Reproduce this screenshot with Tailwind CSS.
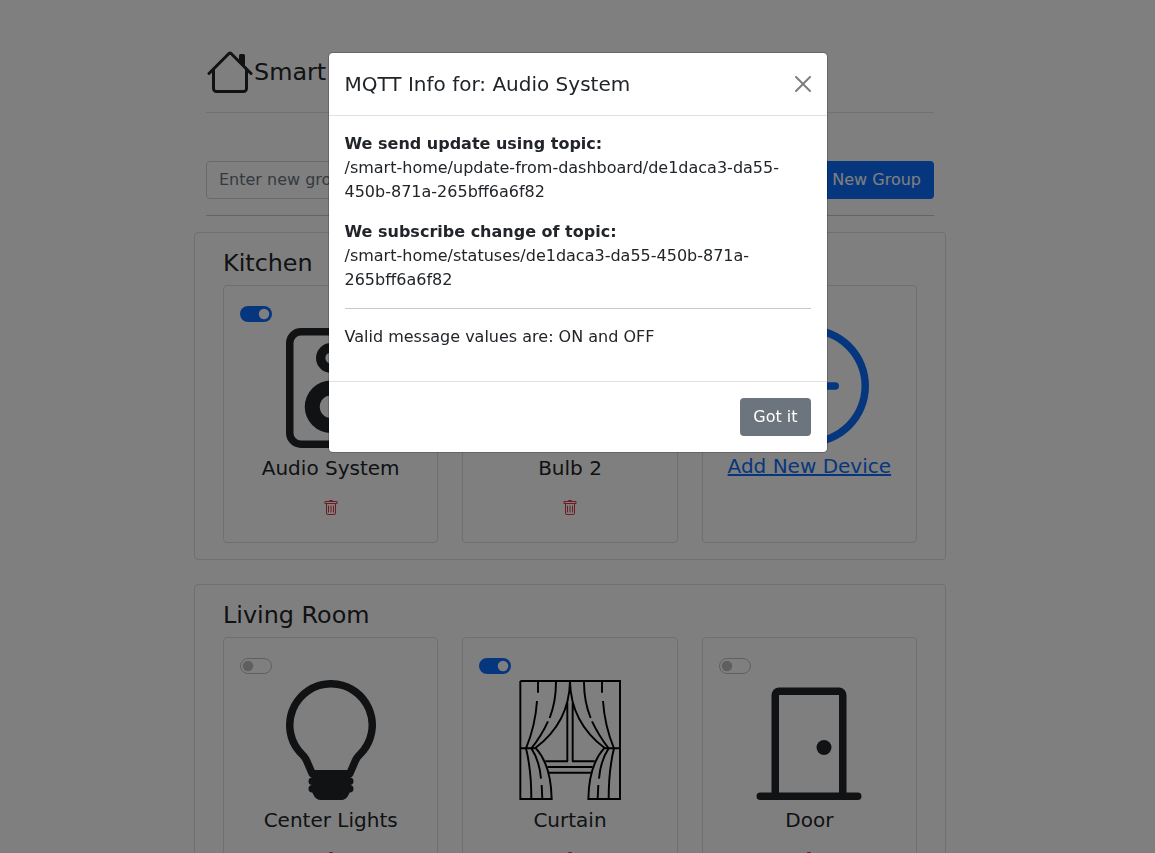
<!DOCTYPE html>
<html lang="en">
<head>
<meta charset="utf-8">
<title>Smart Home</title>
<script src="https://cdn.jsdelivr.net/npm/@tailwindcss/browser@4"></script>
</head>
<body class="bg-white font-['DejaVu_Sans',sans-serif] text-base text-[#212529]">
<svg class="hidden" xmlns="http://www.w3.org/2000/svg">
  <symbol id="trash" viewBox="0 0 16 16"><path d="M5.5 5.5A.5.5 0 0 1 6 6v6a.5.5 0 0 1-1 0V6a.5.5 0 0 1 .5-.5zm2.5 0a.5.5 0 0 1 .5.5v6a.5.5 0 0 1-1 0V6a.5.5 0 0 1 .5-.5zm3 .5a.5.5 0 0 0-1 0v6a.5.5 0 0 0 1 0V6z"/><path fill-rule="evenodd" d="M14.5 3a1 1 0 0 1-1 1H13v9a2 2 0 0 1-2 2H5a2 2 0 0 1-2-2V4h-.5a1 1 0 0 1-1-1V2a1 1 0 0 1 1-1H6a1 1 0 0 1 1-1h2a1 1 0 0 1 1 1h3.5a1 1 0 0 1 1 1v1zM4.118 4 4 4.059V13a1 1 0 0 0 1 1h6a1 1 0 0 0 1-1V4.059L11.882 4H4.118zM2.5 3V2h11v1h-11z"/></symbol>
  <symbol id="bulb" viewBox="0 0 16 16"><path d="M2 6a6 6 0 1 1 10.174 4.31c-.203.196-.359.4-.453.619l-.762 1.769A.5.5 0 0 1 10.5 13a.5.5 0 0 1 0 1 .5.5 0 0 1 0 1l-.224.447a1 1 0 0 1-.894.553H6.618a1 1 0 0 1-.894-.553L5.5 15a.5.5 0 0 1 0-1 .5.5 0 0 1 0-1 .5.5 0 0 1-.46-.302l-.761-1.77a1.964 1.964 0 0 0-.453-.618A5.984 5.984 0 0 1 2 6zm6-5a5 5 0 0 0-3.479 8.592c.263.254.514.564.676.941L5.83 12h4.342l.632-1.467c.162-.377.413-.687.676-.941A5 5 0 0 0 8 1z"/></symbol>
  <symbol id="on" viewBox="0 0 32 16"><rect width="32" height="16" rx="8" fill="#0d6efd"/><circle cx="24" cy="8" r="5.25" fill="#fff"/></symbol>
  <symbol id="off" viewBox="0 0 32 16"><rect x=".5" y=".5" width="31" height="15" rx="7.5" fill="#fff" stroke="#bfbfbf"/><circle cx="8" cy="8" r="5.25" fill="#bfbfbf"/></symbol>
</svg>

<div class="h-[853px] w-[1140px] overflow-hidden">
  <div class="mx-auto w-[752px] pt-12">
    <header class="mx-3 flex h-[65px] items-start border-b border-[#dee2e6]">
      <svg class="size-12" viewBox="0 0 16 16" fill="currentColor"><path fill-rule="evenodd" d="M2 13.5V7h1v6.5a.5.5 0 0 0 .5.5h9a.5.5 0 0 0 .5-.5V7h1v6.5a1.5 1.5 0 0 1-1.5 1.5h-9A1.5 1.5 0 0 1 2 13.5zm11-11V6l-2-2V2.5a.5.5 0 0 1 .5-.5h1a.5.5 0 0 1 .5.5z"/><path fill-rule="evenodd" d="M7.293 1.5a1 1 0 0 1 1.414 0l6.647 6.646a.5.5 0 0 1-.708.708L8 2.207 1.354 8.854a.5.5 0 1 1-.708-.708L7.293 1.5z"/></svg>
      <span class="text-[23.865px] leading-[48px]">Smart Home</span>
    </header>
    <form class="mx-3 mt-12 flex h-[38px]">
      <input class="min-w-0 flex-1 rounded-l border border-[#ced4da] px-3 placeholder:text-[#6c757d]" placeholder="Enter new group name">
      <button type="button" class="rounded-r bg-[#0d6efd] px-[13px] text-white">Add New Group</button>
    </form>
    <div class="mx-3 mt-4 h-px bg-[#212529]/25"></div>

    <section class="mt-4 h-[328px] rounded border border-black/[.125] px-7 pt-4">
      <h2 class="text-[23.865px] leading-[28.6px]">Kitchen</h2>
      <div class="mt-[7.4px] grid h-[258px] grid-cols-3 gap-6">
        <div class="flex flex-col items-center rounded border border-black/[.125] px-4">
          <svg class="mt-5 h-4 w-8 self-start"><use href="#on"/></svg>
          <svg class="mt-[6px] size-[120px] shrink-0" viewBox="0 0 16 16" fill="currentColor"><path d="M12 1a1 1 0 0 1 1 1v12a1 1 0 0 1-1 1H4a1 1 0 0 1-1-1V2a1 1 0 0 1 1-1h8zM4 0a2 2 0 0 0-2 2v12a2 2 0 0 0 2 2h8a2 2 0 0 0 2-2V2a2 2 0 0 0-2-2H4z"/><path d="M8 4.75a.75.75 0 1 1 0-1.5.75.75 0 0 1 0 1.5zM8 6a2 2 0 1 0 0-4 2 2 0 0 0 0 4zm0 3a1.5 1.5 0 1 0 0 3 1.5 1.5 0 0 0 0-3zm-3.5 1.5a3.5 3.5 0 1 1 7 0 3.5 3.5 0 0 1-7 0z"/></svg>
          <h3 class="mt-2 text-xl leading-6">Audio System</h3>
          <svg class="mt-5 size-4 fill-[#dc3545]"><use href="#trash"/></svg>
        </div>
        <div class="flex flex-col items-center rounded border border-black/[.125] px-4">
          <svg class="mt-5 h-4 w-8 self-start"><use href="#on"/></svg>
          <svg class="mt-[6px] size-[120px] shrink-0" fill="currentColor"><use href="#bulb"/></svg>
          <h3 class="mt-2 text-xl leading-6">Bulb 2</h3>
          <svg class="mt-5 size-4 fill-[#dc3545]"><use href="#trash"/></svg>
        </div>
        <a class="flex flex-col items-center rounded border border-black/[.125] px-4 text-[#0d6efd]">
          <svg class="mt-10 size-[120px] shrink-0" viewBox="0 0 16 16" fill="currentColor"><path d="M8 15A7 7 0 1 1 8 1a7 7 0 0 1 0 14zm0 1A8 8 0 1 0 8 0a8 8 0 0 0 0 16z"/><path d="M8 4a.5.5 0 0 1 .5.5v3h3a.5.5 0 0 1 0 1h-3v3a.5.5 0 0 1-1 0v-3h-3a.5.5 0 0 1 0-1h3v-3A.5.5 0 0 1 8 4z"/></svg>
          <h3 class="mt-2 text-xl leading-6 whitespace-nowrap underline">Add New Device</h3>
        </a>
      </div>
    </section>

    <section class="mt-6 h-[328px] rounded border border-black/[.125] px-7 pt-4">
      <h2 class="text-[23.865px] leading-[28.6px]">Living Room</h2>
      <div class="mt-[7.4px] grid h-[258px] grid-cols-3 gap-6">
        <div class="flex flex-col items-center rounded border border-black/[.125] px-4">
          <svg class="mt-5 h-4 w-8 self-start"><use href="#off"/></svg>
          <svg class="mt-[6px] size-[120px] shrink-0" fill="currentColor"><use href="#bulb"/></svg>
          <h3 class="mt-2 text-xl leading-6">Center Lights</h3>
          <svg class="mt-5 size-4 fill-[#dc3545]"><use href="#trash"/></svg>
        </div>
        <div class="flex flex-col items-center rounded border border-black/[.125] px-4">
          <svg class="mt-5 h-4 w-8 self-start"><use href="#on"/></svg>
          <svg class="mt-[6px] size-[120px] shrink-0" viewBox="30 30 360 360" fill="none" stroke="#000" stroke-width="5.8">
            <path d="M61 33H360V387H265Q267 285 312 235M61 33V387H155Q153 285 108 235M61 235H108M312 235H360"/>
            <path d="M210 33Q208 158 105 235M210 33Q212 158 315 235M202 98V274M218 98V274M204 274H136M216 274H284M142 291H278M145 308H275"/>
            <path d="M114 36V68M111 93Q106 168 78 235Q94 300 94 387M168 36Q168 95 149 144M144 154Q124 198 94 235Q118 270 123 326M125 345L127 387"/>
            <path d="M306 36V68M309 93Q314 168 342 235Q326 300 326 387M252 36Q252 95 272 144M276 154Q297 198 326 235Q302 270 297 326M295 345L293 387"/>
          </svg>
          <h3 class="mt-2 text-xl leading-6">Curtain</h3>
          <svg class="mt-5 size-4 fill-[#dc3545]"><use href="#trash"/></svg>
        </div>
        <div class="flex flex-col items-center rounded border border-black/[.125] px-4">
          <svg class="mt-5 h-4 w-8 self-start"><use href="#off"/></svg>
          <svg class="mt-[6px] size-[120px] shrink-0" viewBox="0 0 16 16" fill="currentColor"><path d="M3 2a1 1 0 0 1 1-1h8a1 1 0 0 1 1 1v13h1.5a.5.5 0 0 1 0 1h-13a.5.5 0 0 1 0-1H3V2zm1 13h8V2H4v13z"/><path d="M9 9a1 1 0 1 0 2 0 1 1 0 0 0-2 0z"/></svg>
          <h3 class="mt-2 text-xl leading-6">Door</h3>
          <svg class="mt-5 size-4 fill-[#dc3545]"><use href="#trash"/></svg>
        </div>
      </div>
    </section>
  </div>
</div>

<div class="fixed inset-0 bg-black/50"></div>
<div class="fixed inset-0 pt-[52px]">
  <div class="mx-auto w-[500px] rounded-[4.8px] border border-black/20 bg-white bg-clip-padding">
    <div class="flex items-center justify-between border-b border-[#dee2e6] p-4">
      <h5 class="text-xl leading-[30px]">MQTT Info for: Audio System</h5>
      <svg class="size-4 opacity-50" viewBox="0 0 16 16" fill="#000"><path d="M.293.293a1 1 0 011.414 0L8 6.586 14.293.293a1 1 0 111.414 1.414L9.414 8l6.293 6.293a1 1 0 01-1.414 1.414L8 9.414l-6.293 6.293a1 1 0 01-1.414-1.414L6.586 8 .293 1.707a1 1 0 010-1.414z"/></svg>
    </div>
    <div class="p-4 leading-6">
      <p class="mb-4"><b>We send update using topic:</b><br>/smart-home/update-from-dashboard/de1daca3-da55-450b-871a-265bff6a6f82</p>
      <p><b>We subscribe change of topic:</b><br>/smart-home/statuses/de1daca3-da55-450b-871a-265bff6a6f82</p>
      <div class="my-4 h-px bg-[#212529]/25"></div>
      <p class="mb-4">Valid message values are: ON and OFF</p>
    </div>
    <div class="flex justify-end border-t border-[#dee2e6] p-4">
      <button class="h-[38px] rounded bg-[#6c757d] px-[13px] text-white">Got it</button>
    </div>
  </div>
</div>
</body>
</html>
